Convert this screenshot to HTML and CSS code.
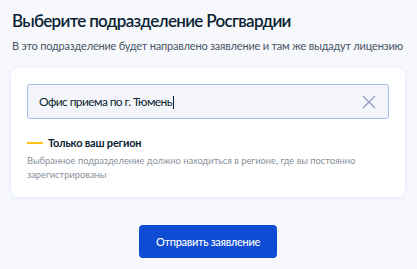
FILE: index.html
```html
<!DOCTYPE html>
<html lang="ru">
<head>
    <meta charset="UTF-8">
    <title>Выбор подразделения</title>
    <link rel="stylesheet" href="styles.css">
</head>
<body>

<div class="page">
    <h2 class="title">Выберите подразделение Росгвардии</h2>
    <p class="subtitle">В это подразделение будет направлено заявление и там же выдадут лицензию</p>

    <div class="card">
        <div class="search">
            <span class="search-value">Офис приема по г. Тюмень<span class="caret"></span></span>
            <svg class="clear" width="14" height="14" viewBox="0 0 14 14">
                <path d="M1 1 L13 13 M13 1 L1 13" stroke="#8e9bbd" stroke-width="1.2" fill="none"/>
            </svg>
        </div>

        <div class="hint">
            <div class="hint-title"><span class="hint-line"></span>Только ваш регион</div>
            <div class="hint-text">Выбранное подразделение должно находиться в регионе, где вы постоянно зарегистрированы</div>
        </div>
    </div>

    <div class="actions">
        <button class="submit-btn">Отправить заявление</button>
    </div>
</div>

</body>
</html>
```

FILE: styles.css
```css
body {
    margin: 0;
    font-family: Lato, "Open Sans", sans-serif;
    background-color: #f6f8fc;
    color: #0b1f33;
}
.page {
    padding: 9px 12px 0 11px;
}
.title {
    margin: 0 0 0 1px;
    font-size: 17px;
    font-weight: 600;
    letter-spacing: -0.7px;
    line-height: 24px;
}
.subtitle {
    margin: 6px 0 0 1px;
    font-size: 11px;
    letter-spacing: -0.2px;
    line-height: 14px;
    color: #4a5566;
}
.card {
    margin-top: 15px;
    background-color: #ffffff;
    border-radius: 8px;
    box-shadow: 0 1px 4px rgba(180, 195, 230, 0.25);
    padding: 16px 16px 15px 16px;
}
.search {
    display: flex;
    align-items: center;
    justify-content: space-between;
    height: 33px;
    padding: 0 11px;
    background-color: #f3f5fa;
    border: 1px solid #a6b8ec;
    border-radius: 3px;
}
.search-value {
    font-size: 12px;
    letter-spacing: -0.6px;
    color: #0b1f33;
}
.caret {
    display: inline-block;
    width: 1px;
    height: 13px;
    margin-left: 1px;
    background-color: #0b1f33;
    vertical-align: -3px;
}
.clear {
    margin-right: 1px;
}
.hint {
    margin-top: 16px;
}
.hint-title {
    display: flex;
    align-items: center;
    font-size: 11px;
    font-weight: 700;
    letter-spacing: -0.2px;
    line-height: 16px;
}
.hint-line {
    display: inline-block;
    width: 16px;
    height: 2px;
    background-color: #fcc419;
    margin-right: 5px;
}
.hint-text {
    margin-top: 3px;
    font-size: 9.3px;
    line-height: 14px;
    color: #86909c;
}
.actions {
    display: flex;
    justify-content: center;
    margin-top: 28px;
}
.submit-btn {
    width: 138px;
    height: 33px;
    border: none;
    border-radius: 4px;
    background-color: #0d4cd3;
    color: #ffffff;
    font-family: Lato, "Open Sans", sans-serif;
    font-size: 11px;
    font-weight: 500;
    letter-spacing: -0.3px;
    cursor: pointer;
}
```
